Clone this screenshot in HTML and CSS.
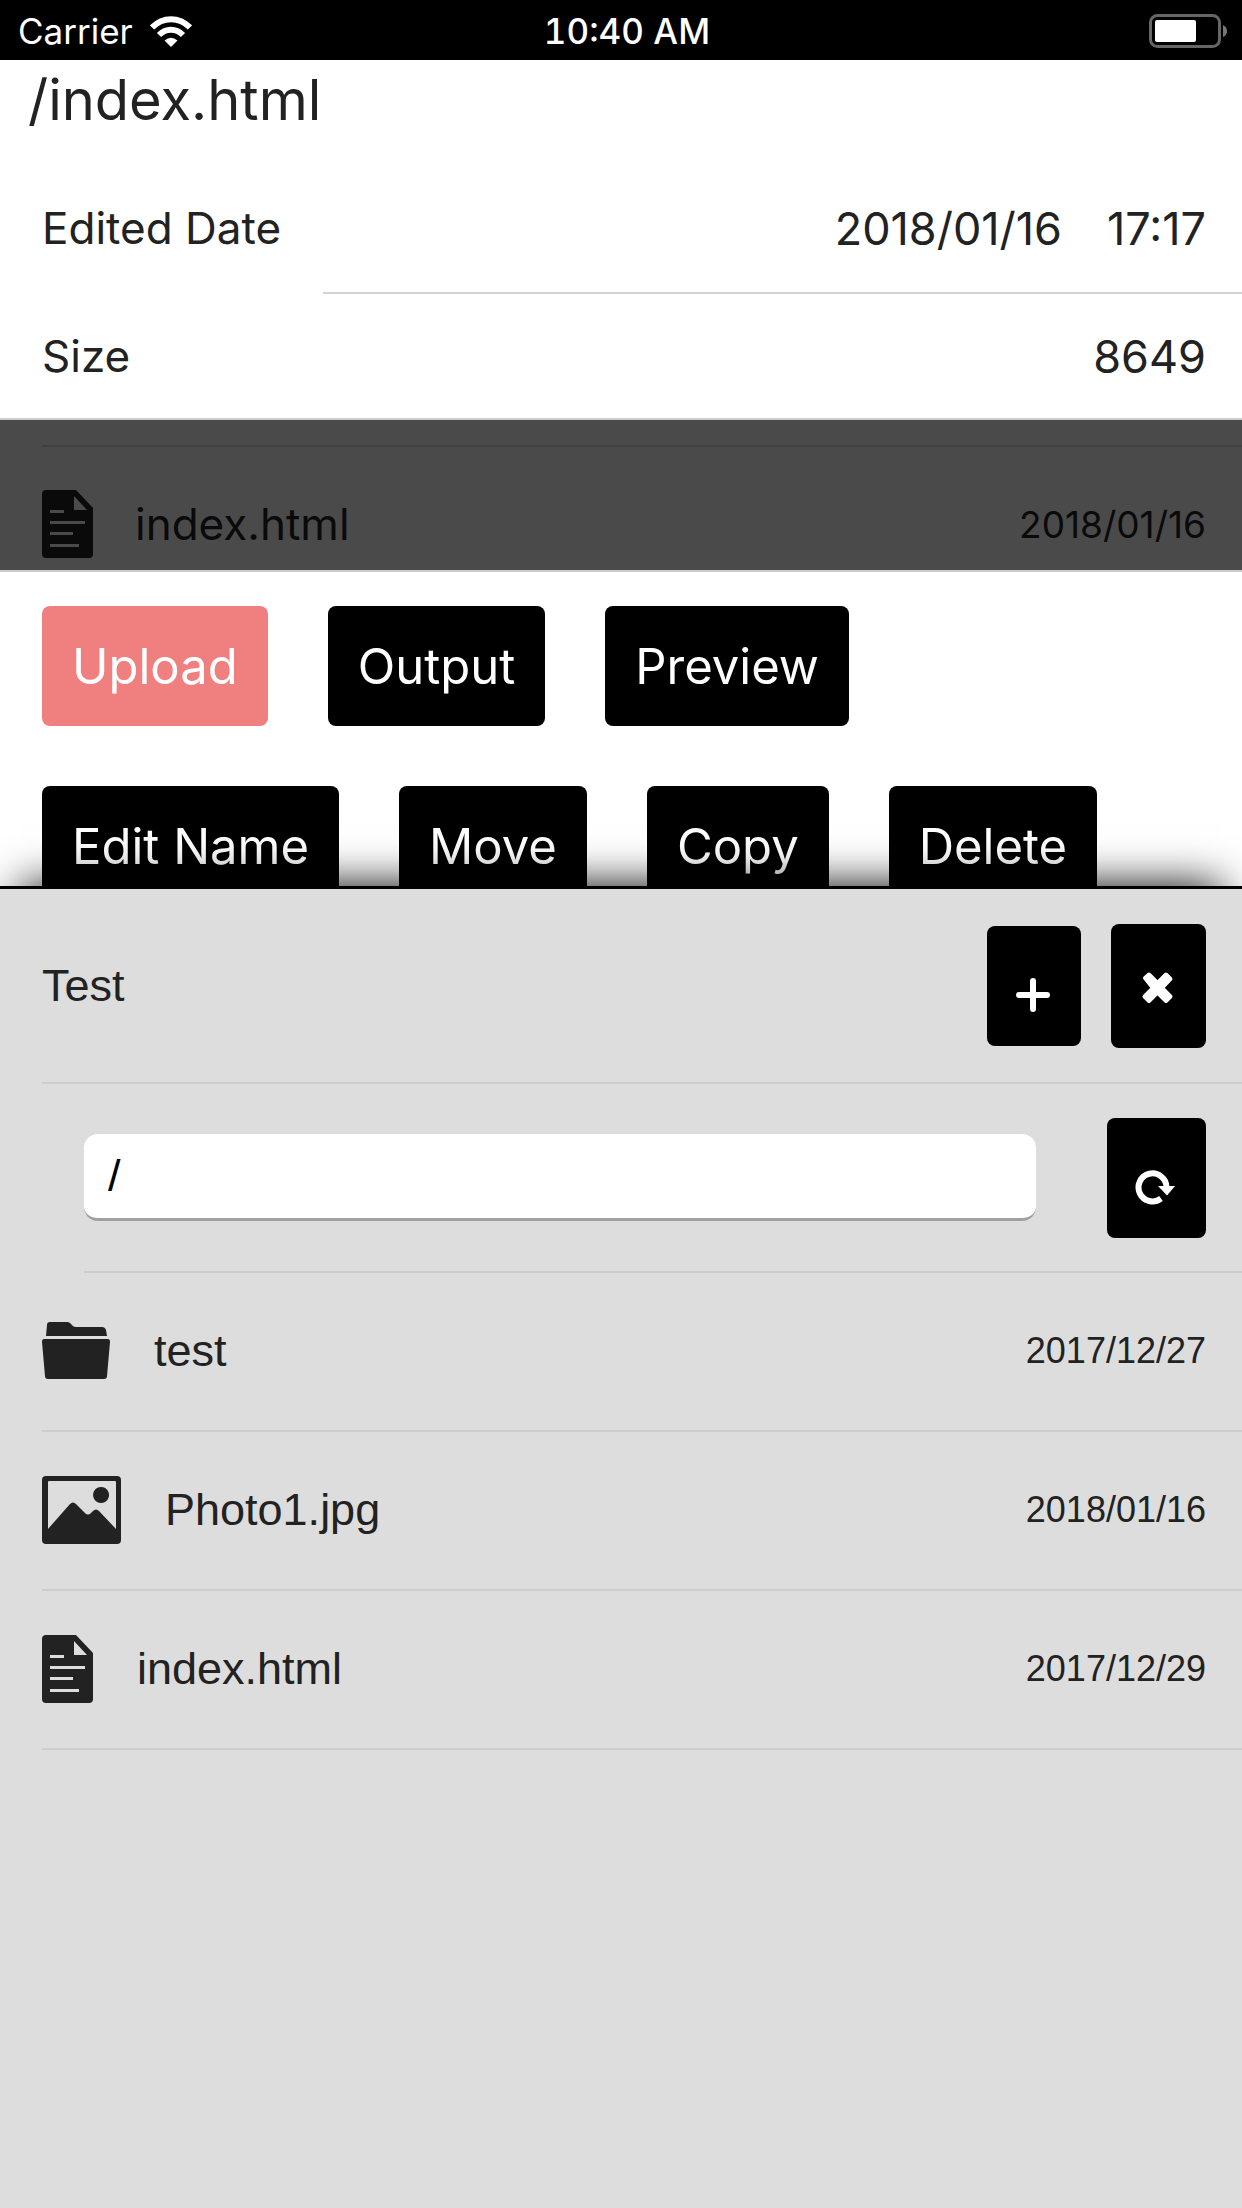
FILE: index.html
```
<!DOCTYPE html>
<html lang="en">
<head>
<meta charset="utf-8">
<meta name="viewport" content="width=device-width">
<title>File manager</title>
<link rel="stylesheet" href="styles.css">
</head>
<body>
<svg class="sprite" aria-hidden="true">
  <symbol id="icon-file" viewBox="0 0 51 68">
    <path fill-rule="evenodd" d="M4 0H34L51 18V64a4 4 0 0 1-4 4H4a4 4 0 0 1-4-4V4a4 4 0 0 1 4-4ZM32 6V20H45ZM8 20V23H22V20ZM8 31V34H43V31ZM8 42V45H31V42ZM8 54V57H37V54Z"/>
  </symbol>
  <symbol id="icon-folder" viewBox="0 0 68 57">
    <path d="M5 3q0-3 3-3H25q2 0 3 1L31 4q1 1 3 1H60q3 0 4 3L65 14H4ZM2 17H66q2 0 2 3L65 54q0 3-3 3H6q-3 0-3-3L0 20q0-3 2-3Z"/>
  </symbol>
  <symbol id="icon-photo" viewBox="0 0 79 68">
    <path fill-rule="evenodd" d="M4 0H75a4 4 0 0 1 4 4V64a4 4 0 0 1-4 4H4a4 4 0 0 1-4-4V4a4 4 0 0 1 4-4ZM7 5q-1 0-1 1V53L28 28q3-3 6 0L43 37q3 3 6 0l2-2q3-3 6 0L74 53V6q0-1-1-1ZM59 11a8 8 0 1 0 .1 0Z"/>
  </symbol>
</svg>

<header class="status">
  <div class="status-carrier">
    <span>Carrier</span>
    <svg width="42" height="31" viewBox="0 0 42 31" fill="none" stroke="#fff" aria-hidden="true">
      <path class="line" stroke-width="6" d="M2 11.500C13 .5 29 .5 40 11.500"/>
      <path class="line" stroke-width="6" d="M9 19C16 12 26 12 33 19"/>
      <path fill="#fff" stroke="none" d="M14.500 24.500Q21 19 27.500 24.500L21 31Z"/>
    </svg>
  </div>
  <time class="status-time">10:40 AM</time>
  <div class="status-battery">
    <svg width="79" height="34" viewBox="0 0 79 34" aria-hidden="true">
      <rect x="1.500" y="1.500" width="69" height="31" rx="7" fill="none" stroke="#666" stroke-width="3"/>
      <rect x="6" y="6" width="41" height="22" rx="2" fill="#fff"/>
      <path fill="#777" d="M74 11q4 2 4 6t-4 6Z"/>
    </svg>
  </div>
</header>

<main class="page">
  <section class="info">
    <h1 class="info-title">/index.html</h1>
    <dl class="info-rows">
      <div class="info-row"><dt>Edited Date</dt><dd><span>2018/01/16</span><span>17:17</span></dd></div>
      <div class="info-row"><dt>Size</dt><dd><span>8649</span></dd></div>
    </dl>
  </section>

  <section class="dimmed">
    <div class="dimmed-row">
      <svg class="icon-file"><use href="#icon-file"/></svg>
      <span class="file-name">index.html</span>
      <time class="dimmed-date">2018/01/16</time>
    </div>
  </section>

  <section class="actions">
    <div class="action-row">
      <button class="button button-primary" type="button">Upload</button>
      <button class="button" type="button">Output</button>
      <button class="button" type="button">Preview</button>
    </div>
    <div class="action-row">
      <button class="button" type="button">Edit Name</button>
      <button class="button" type="button">Move</button>
      <button class="button" type="button">Copy</button>
      <button class="button" type="button">Delete</button>
    </div>
  </section>

  <section class="browser">
    <div class="browser-head">
      <h2 class="browser-title">Test</h2>
      <button class="icon-button" type="button" aria-label="Add">
        <svg width="94" height="120" viewBox="0 0 94 120" fill="none" stroke="#fff" stroke-width="6" stroke-linecap="round"><path d="M32 69H60M46 55V83"/></svg>
      </button>
      <button class="icon-button" type="button" aria-label="Close">
        <svg width="95" height="124" viewBox="0 0 95 124" stroke="#fff" stroke-linejoin="round"><path stroke-width="4" stroke-linecap="round" fill="#fff" d="M34 54L38 50.500 46.500 59 55 50.500 59.500 55 51 64 59.500 72.500 55 77 46.500 68.500 38 77 33.500 72.500 42 64Z"/></svg>
      </button>
    </div>
    <form class="browser-path">
      <input class="path-input" type="text" value="/" aria-label="Path">
      <button class="icon-button" type="button" aria-label="Reload">
        <svg width="99" height="120" viewBox="0 0 99 120"><path fill="none" stroke="#fff" stroke-width="6" d="M59.500 69A14 14 0 1 0 54 80.500"/><path fill="#fff" d="M51 68H68L60 77.500Z"/></svg>
      </button>
    </form>
    <ul class="files">
      <li class="file-row">
        <svg class="icon-folder"><use href="#icon-folder"/></svg>
        <span class="file-name">test</span>
        <time class="file-date">2017/12/27</time>
      </li>
      <li class="file-row">
        <svg class="icon-photo"><use href="#icon-photo"/></svg>
        <span class="file-name">Photo1.jpg</span>
        <time class="file-date">2018/01/16</time>
      </li>
      <li class="file-row">
        <svg class="icon-file"><use href="#icon-file"/></svg>
        <span class="file-name">index.html</span>
        <time class="file-date">2017/12/29</time>
      </li>
    </ul>
  </section>
</main>
</body>
</html>
```
FILE: styles.css
```
* { box-sizing: border-box; }

body {
  margin: 0;
  min-height: 100vh;
  display: flex;
  flex-direction: column;
  background: #fff;
  color: #222;
  font-family: Inter, "Liberation Sans", sans-serif;
  font-size: 44px;
}

h1, h2, dl, dd, ul { margin: 0; padding: 0; font-weight: 400; }
ul { list-style: none; }
button, input { font: inherit; border: 0; margin: 0; }

.sprite { display: none; }

/* Status bar */
.status {
  display: grid;
  grid-template-columns: 1fr auto 1fr;
  align-items: center;
  height: 60px;
  padding: 2px 14px 0 18px;
  background: #000;
  color: #fff;
  font-size: 35px;
}
.status-carrier { display: flex; align-items: center; gap: 17px; }
.status-carrier .line { fill: none; }
.status-time { padding-left: 8px; font-weight: 500; font-variant-numeric: tabular-nums; }
.status-battery { display: flex; justify-content: flex-end; }

.page { flex: 1; display: flex; flex-direction: column; }

/* File details */
.info { border-bottom: 2px solid #ccc; }
.info-title { padding: 0 28px 24px; font-size: 56px; line-height: 80px; }
.info-row {
  display: grid;
  grid-template-columns: 281px 1fr;
  min-height: 128px;
  padding-left: 42px;
}
.info-row dt { display: flex; align-items: center; }
.info-row dd {
  display: flex;
  justify-content: flex-end;
  align-items: center;
  gap: 45px;
  padding-right: 36px;
  font-size: 45px;
}
.info-row + .info-row { min-height: 126px; }
.info-row + .info-row dt { border-top: 2px solid transparent; }
.info-row + .info-row dd { border-top: 2px solid #d2d2d2; }

/* Row behind the open sheet */
.dimmed { padding: 25px 0 0 42px; background: #4a4a4a; color: #0a0a0a; }
.dimmed-row {
  display: flex;
  align-items: center;
  gap: 42px;
  min-height: 156px;
  margin-bottom: -31px;
  padding-right: 36px;
  border-top: 2px solid #404040;
}
.dimmed-date { font-size: 37px; }
.file-name { flex: 1; }
.file-date { font-size: 36px; }

svg { fill: currentColor; flex: none; display: block; }
.icon-file { width: 51px; height: 68px; }
.icon-folder { width: 68px; height: 57px; }
.icon-photo { width: 79px; height: 68px; }

/* Actions */
.actions {
  position: relative;
  display: grid;
  gap: 60px;
  margin-bottom: -20px;
  padding: 34px 42px 0;
  border-top: 2px solid #ccc;
  background: #fff;
}
.action-row { display: flex; gap: 60px; }
.button {
  height: 120px;
  padding: 0 30px;
  border-radius: 8px;
  background: #000;
  color: #fff;
  font-size: 49px;
}
.button-primary { background: #f08080; }

/* File browser sheet */
.browser {
  position: relative;
  flex: 1;
  border-top: 3px solid #000;
  background: #ddd;
  box-shadow: 0 -21px 42px -21px #000;
  font-family: "Liberation Sans", Arial, sans-serif;
  font-size: 45px;
}
.browser-head {
  display: flex;
  align-items: center;
  gap: 30px;
  min-height: 195px;
  margin-left: 42px;
  padding-right: 36px;
  border-bottom: 2px solid #cdcdcd;
}
.browser-title { flex: 1; font-size: 45px; }
.icon-button { padding: 0; border-radius: 8px; background: #000; overflow: hidden; }
.browser-path {
  display: flex;
  align-items: center;
  gap: 71px;
  min-height: 189px;
  margin-left: 84px;
  padding-right: 36px;
  border-bottom: 2px solid #cdcdcd;
}
.path-input {
  flex: 1;
  min-width: 0;
  height: 87px;
  padding: 0 24px;
  border-bottom: 3px solid #a0a0a0;
  border-radius: 14px;
  background: #fff;
  color: #000;
}
.file-row {
  display: flex;
  align-items: center;
  gap: 44px;
  min-height: 159px;
  margin-left: 42px;
  padding: 0 36px 2px 0;
  border-bottom: 2px solid #cdcdcd;
}
```
